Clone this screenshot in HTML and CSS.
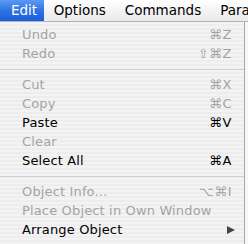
FILE: index.html
```html
<!DOCTYPE html>
<html>
<head>
<meta charset="utf-8">
<link rel="stylesheet" href="styles.css">
</head>
<body>
<div class="menubar">
  <div class="mb-item active">Edit</div>
  <div class="mb-item">Options</div>
  <div class="mb-item">Commands</div>
  <div class="mb-item">Para</div>
</div>
<div class="menu">
  <div class="row off"><span>Undo</span><span class="key">⌘Z</span></div>
  <div class="row off"><span>Redo</span><span class="key">⇧⌘Z</span></div>
  <div class="sep"></div>
  <div class="row off"><span>Cut</span><span class="key">⌘X</span></div>
  <div class="row off"><span>Copy</span><span class="key">⌘C</span></div>
  <div class="row"><span>Paste</span><span class="key">⌘V</span></div>
  <div class="row off"><span>Clear</span></div>
  <div class="row"><span>Select All</span><span class="key">⌘A</span></div>
  <div class="sep"></div>
  <div class="row off"><span>Object Info...</span><span class="key">⌥⌘I</span></div>
  <div class="row off"><span>Place Object in Own Window</span></div>
  <div class="row"><span>Arrange Object</span><span class="arrow"></span></div>
</div>
</body>
</html>
```
FILE: styles.css
```css
html, body {
  margin: 0;
  padding: 0;
  background: #f7f7f7;
  width: 248px;
  height: 244px;
  overflow: hidden;
  font-family: "DejaVu Sans", "Liberation Sans", sans-serif;
}
.menubar {
  display: flex;
  height: 21px;
  border-bottom: 1px solid #b4b4b4;
  background: linear-gradient(#ffffff, #f4f4f4 50%, #e9e9e9);
  font-size: 13.5px;
  line-height: 21px;
  color: #000;
  white-space: nowrap;
}
.mb-item {
  padding: 0 9.5px;
}
.mb-item.active {
  padding: 0 7px 0 11px;
  color: #fff;
  background: linear-gradient(#5b9af2, #2f73e6 50%, #1a5fdc);
}
.menu {
  width: 245px;
  height: 222px;
  border-right: 1px solid #a8a8a8;
  padding-top: 3px;
  box-sizing: border-box;
  background: repeating-linear-gradient(#f3f3f3 0 2px, #ededed 2px 4px);
  font-size: 13px;
  color: #000;
}
.row {
  display: flex;
  justify-content: space-between;
  align-items: center;
  height: 19px;
  padding: 0 12px 0 22px;
  white-space: nowrap;
  letter-spacing: 0.15px;
}
.row.off {
  color: #a3a3a3;
}
.key {
  letter-spacing: 0.5px;
}
.sep {
  height: 12px;
  padding-top: 6px;
  box-sizing: border-box;
}
.sep::after {
  content: "";
  display: block;
  height: 1px;
  background: #cfcfcf;
}
.arrow {
  width: 0;
  height: 0;
  margin-right: -3px;
  border-top: 4px solid transparent;
  border-bottom: 4px solid transparent;
  border-left: 8px solid #444;
}
```
